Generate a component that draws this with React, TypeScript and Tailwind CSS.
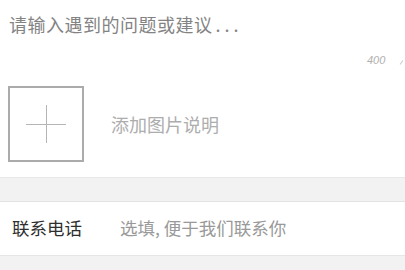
import React from "react";

export default function App() {
  const font = { fontFamily: '"Noto Sans CJK SC", "Noto Sans", sans-serif' };
  return (
    <div className="w-[405px] h-[270px] bg-[#f2f2f2] overflow-hidden" style={font}>
      <div className="bg-white h-[177px] flex flex-col">
        <div className="pl-[9px] pt-[12px] text-[18px] leading-[24px] text-[#838383] tracking-[0.5px]">
          请输入遇到的问题或建议<span className="tracking-[4px] ml-[3px]">...</span>
        </div>
        <div className="relative h-[23px] mt-[16px]">
          <span
            className="absolute left-[367px] top-[1px] text-[11px] leading-[14px] italic text-[#b0b0b0]"
            style={{ fontFamily: '"Liberation Sans", sans-serif' }}
          >
            400
          </span>
          <span className="absolute left-[401px] top-[8px] w-[1px] h-[5px] bg-[#c8c8c8] rotate-[35deg]" />
        </div>
        <div className="flex items-center mt-[11px] pl-[8px]">
          <div className="relative w-[76px] h-[76px] border-2 border-[#ababab] flex items-center justify-center">
            <div className="absolute w-[40px] h-[1px] bg-[#b5b5b5]" />
            <div className="absolute w-[1px] h-[38px] bg-[#b5b5b5]" />
          </div>
          <div className="ml-[27px] text-[18px] leading-[24px] text-[#adadad]">添加图片说明</div>
        </div>
      </div>
      <div className="h-[25px] border-t border-[#e8e8e8] border-b border-b-[#e2e2e2]" />
      <div className="bg-white h-[54px] flex items-center border-b border-[#e6e6e6]">
        <div className="pl-[12px] w-[120px] text-[17.5px] text-[#2e2e2e]">联系电话</div>
        <div className="text-[17.5px] text-[#999999]">选填, 便于我们联系你</div>
      </div>
    </div>
  );
}
